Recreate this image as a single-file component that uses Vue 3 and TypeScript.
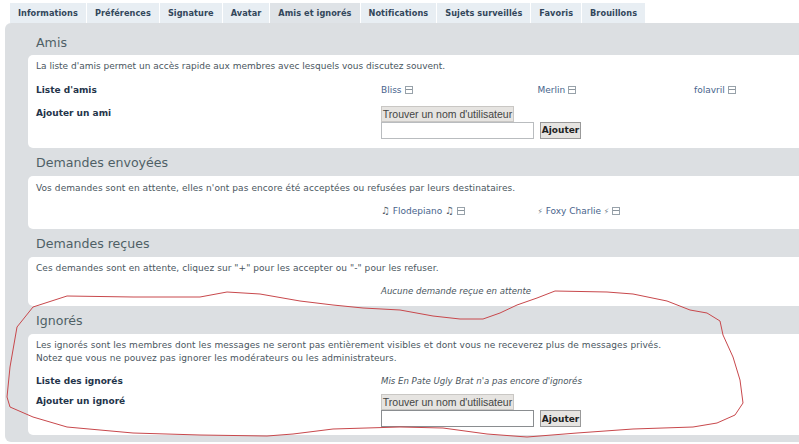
<script setup lang="ts">
interface Friend { pre?: string; name: string; music?: boolean; }
const tabs: string[] = ['Informations', 'Préférences', 'Signature', 'Avatar', 'Amis et ignorés', 'Notifications', 'Sujets surveillés', 'Favoris', 'Brouillons'];
const friends: Friend[] = [{ name: 'Bliss' }, { name: 'Merlin' }, { name: 'folavril' }];
const pending: Friend[] = [{ pre: '♫', name: 'Flodepiano', music: true }, { pre: '⚡', name: 'Foxy Charlie' }];
const pts = '200,297 227,292 260,294 300,301 333,305 363,308 400,310 433,316 460,319 483,319 500,313 517,305 537,298 555,291 607,292 633,294 667,301 690,310 707,313 720,321 723,335 733,357 740,380 743,403 735,415 717,423 693,427 633,429 577,433 527,437 487,434 443,428 400,427 333,429 293,434 267,436 200,435 133,433 67,427 33,417 10,407 7,397 10,367 17,327 33,307 67,296 133,297 200,297';
</script>

<template>
  <div class="page">
    <nav class="tabs">
      <span v-for="t in tabs" :key="t" class="tab" :class="{ active: t === 'Amis et ignorés' }">{{ t }}</span>
    </nav>
    <main class="panel">
      <h3 class="title first">Amis</h3>
      <section class="box amis">
        <p class="intro">La liste d'amis permet un accès rapide aux membres avec lesquels vous discutez souvent.</p>
        <div class="row list-row">
          <strong class="label">Liste d'amis</strong>
          <div class="people">
            <span v-for="f in friends" :key="f.name" class="person">{{ f.name }}<i class="minus"></i></span>
          </div>
        </div>
        <div class="row add-row">
          <strong class="label">Ajouter un ami</strong>
          <div class="finder">
            <button class="find" type="button">Trouver un nom d'utilisateur</button>
            <div class="add-line"><input class="field" type="text" /><button class="add" type="button">Ajouter</button></div>
          </div>
        </div>
      </section>

      <h3 class="title">Demandes envoyées</h3>
      <section class="box sent">
        <p class="intro">Vos demandes sont en attente, elles n'ont pas encore été acceptées ou refusées par leurs destinataires.</p>
        <div class="row list-row">
          <span class="label"></span>
          <div class="people">
            <span v-for="f in pending" :key="f.name" class="person"><b class="deco" :class="{ music: f.music }">{{ f.pre }}</b> {{ f.name }} <b class="deco" :class="{ music: f.music }">{{ f.pre }}</b><i class="minus"></i></span>
          </div>
        </div>
      </section>

      <h3 class="title">Demandes reçues</h3>
      <section class="box received">
        <p class="intro">Ces demandes sont en attente, cliquez sur "+" pour les accepter ou "-" pour les refuser.</p>
        <div class="row list-row">
          <span class="label"></span>
          <em class="note">Aucune demande reçue en attente</em>
        </div>
      </section>

      <h3 class="title">Ignorés</h3>
      <section class="box ignored">
        <p class="intro">Les ignorés sont les membres dont les messages ne seront pas entièrement visibles et dont vous ne receverez plus de messages privés.<br />Notez que vous ne pouvez pas ignorer les modérateurs ou les administrateurs.</p>
        <div class="row list-row">
          <strong class="label">Liste des ignorés</strong>
          <em class="note">Mis En Pate Ugly Brat n'a pas encore d'ignorés</em>
        </div>
        <div class="row add-row">
          <strong class="label">Ajouter un ignoré</strong>
          <div class="finder">
            <button class="find" type="button">Trouver un nom d'utilisateur</button>
            <div class="add-line"><input class="field dark" type="text" /><button class="add" type="button">Ajouter</button></div>
          </div>
        </div>
      </section>
    </main>
    <svg class="scribble" width="799" height="444" viewBox="0 0 799 444">
      <polyline :points="pts" fill="none" stroke="#c8484c" stroke-width="1" stroke-linejoin="round" />
    </svg>
  </div>
</template>

<style>
html, body { margin: 0; background: #fff; overflow: hidden; }
</style>

<style scoped>
.page { position: relative; width: 799px; height: 444px; overflow: hidden; padding-top: 3px; box-sizing: border-box; font-family: "DejaVu Sans", Verdana, sans-serif; font-size: 9px; color: #4a5660; }
.tabs { display: flex; gap: 1px; height: 20px; padding-left: 10px; }
.tab { padding: 0 8px; background: #e8eef3; font-weight: 700; font-size: 8.2px; letter-spacing: 0.055px; line-height: 21px; color: #33475b; white-space: nowrap; }
.tab.active { background: #dfe3e7; }
.panel { margin-left: 5px; height: 419px; background: #dcdfe2; border-radius: 6px 0 0 6px; padding-left: 23px; box-sizing: border-box; }
.title { margin: 0; height: 28px; padding-left: 8px; font-weight: 400; font-size: 12.6px; line-height: 30px; color: #4f5f66; }
.title.first { height: 32px; line-height: 40px; }
.box { background: #fff; border-radius: 5px 0 0 5px; padding: 5px 8px 0; box-sizing: border-box; }
.amis { height: 93px; }
.sent { height: 53px; padding-top: 6px; }
.received { height: 49px; }
.ignored { height: 101px; }
.intro { margin: 0; line-height: 12.5px; letter-spacing: 0.06px; }
.amis .intro { letter-spacing: 0; }
.sent .intro { letter-spacing: 0.08px; }
.row { display: flex; }
.label { width: 345px; flex: none; font-size: 9px; font-weight: 700; color: #24344a; }
.list-row { margin-top: 11px; line-height: 12px; }
.sent .list-row, .received .list-row { margin-top: 10px; }
.add-row { margin-top: 11px; line-height: 12px; }
.ignored .add-row { margin-top: 8px; }
.people { display: grid; grid-template-columns: repeat(3, 156.5px); }
.person { color: #48648c; white-space: nowrap; }
.deco { font-weight: 400; font-size: 7.5px; color: #66727e; }
.deco.music { font-size: 10px; font-weight: 700; color: #4a5660; }
.minus { display: inline-block; position: relative; width: 8px; height: 8px; margin-left: 3px; border: 1px solid #98a2aa; box-sizing: border-box; vertical-align: -1px; }
.minus::after { content: ""; position: absolute; left: 0; right: 0; top: 2px; height: 1px; background: #8a949c; }
.note { color: #4a5660; font-style: italic; font-size: 8.6px; }
.finder { display: flex; flex-direction: column; margin-top: -1px; }
.find { align-self: flex-start; width: 133px; height: 16px; padding: 0; margin: 0; background: #e6e4e1; border: 1px solid #c9c7c4; font-family: "Liberation Sans", Arial, sans-serif; font-size: 10.5px; color: #444; white-space: nowrap; }
.add-line { display: flex; gap: 6px; }
.field { width: 153px; height: 17px; margin: 0; padding: 0; background: #fff; border: 1px solid #b9bcbf; box-sizing: border-box; }
.field.dark { border-color: #8a8d90; }
.add { width: 41px; height: 17px; margin: 0; padding: 0; background: #e6e4e1; border: 1px solid #999; font-family: "DejaVu Sans", Verdana, sans-serif; font-weight: 700; font-size: 9px; color: #222; }
.scribble { position: absolute; left: 0; top: 0; pointer-events: none; }
</style>
